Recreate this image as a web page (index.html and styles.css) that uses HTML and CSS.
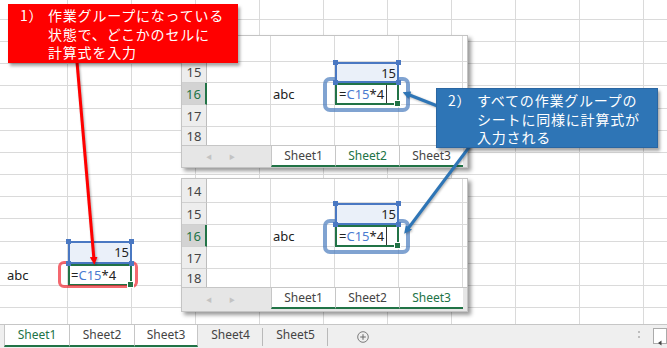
FILE: index.html
```html
<!DOCTYPE html>
<html lang="ja">
<head>
    <meta charset="UTF-8">
    <title>作業グループの計算式</title>
    <link rel="stylesheet" href="styles.css">
</head>
<body>
<div class="screen">

    <!-- main sheet -->
    <div class="sheet">
        <div class="m-abc">abc</div>
        <div class="m-ref ref">
            <i class="h tl"></i><i class="h tr"></i><i class="h bl"></i><i class="h br"></i>15
        </div>
        <div class="m-fx fx">=<span class="r">C15</span>*4<span class="ring red"></span></div>
    </div>

    <div class="tabbar">
        <div class="tab grp on">Sheet1</div>
        <div class="tab grp">Sheet2</div>
        <div class="tab grp last">Sheet3</div>
        <div class="tab plain">Sheet4</div>
        <div class="tab plain">Sheet5</div>
        <div class="add">
            <svg width="12" height="12" viewBox="0 0 12 12">
                <circle cx="6" cy="6" r="5.3" fill="none" stroke="#7b7b7b" stroke-width="1"/>
                <path d="M6 3.2v5.6M3.2 6h5.6" stroke="#6b6b6b" stroke-width="1"/>
            </svg>
        </div>
        <div class="spacer"></div>
        <div class="dots"></div>
        <div class="scroll-btn">
            <svg width="6" height="6" viewBox="0 0 6 6"><path d="M4.5 0.5v5L1 3z" fill="#444"/></svg>
        </div>
    </div>

    <!-- window: Sheet2 (row 14 header sits under the red note) -->
    <div class="win win-a">
        <div class="row"><div class="rh"></div><div class="c"></div><div class="c"></div><div class="c"></div><div class="c"></div><div class="c end"></div></div>
        <div class="row"><div class="rh">15</div><div class="c"></div><div class="c"></div><div class="c ref"><i class="h tl"></i><i class="h tr"></i><i class="h bl"></i><i class="h br"></i>15</div><div class="c"></div><div class="c end"></div></div>
        <div class="row cur"><div class="rh">16</div><div class="c"></div><div class="c">abc</div><div class="c fx">=<span class="r">C15</span>*4<span class="caret"></span><span class="ring"></span></div><div class="c"></div><div class="c end"></div></div>
        <div class="row"><div class="rh">17</div><div class="c"></div><div class="c"></div><div class="c"></div><div class="c"></div><div class="c end"></div></div>
        <div class="row cut"><div class="rh">18</div><div class="c"></div><div class="c"></div><div class="c"></div><div class="c"></div><div class="c end"></div></div>
        <div class="wtabs">
            <div class="wnav"><span>&#9664;</span><span>&#9654;</span></div>
            <div class="wtab">Sheet1</div>
            <div class="wtab on">Sheet2</div>
            <div class="wtab">Sheet3</div>
        </div>
    </div>

    <!-- window: Sheet3 -->
    <div class="win win-b">
        <div class="row"><div class="rh">14</div><div class="c"></div><div class="c"></div><div class="c"></div><div class="c"></div><div class="c end"></div></div>
        <div class="row"><div class="rh">15</div><div class="c"></div><div class="c"></div><div class="c ref"><i class="h tl"></i><i class="h tr"></i><i class="h bl"></i><i class="h br"></i>15</div><div class="c"></div><div class="c end"></div></div>
        <div class="row cur"><div class="rh">16</div><div class="c"></div><div class="c">abc</div><div class="c fx">=<span class="r">C15</span>*4<span class="caret"></span><span class="ring"></span></div><div class="c"></div><div class="c end"></div></div>
        <div class="row"><div class="rh">17</div><div class="c"></div><div class="c"></div><div class="c"></div><div class="c"></div><div class="c end"></div></div>
        <div class="row cut"><div class="rh">18</div><div class="c"></div><div class="c"></div><div class="c"></div><div class="c"></div><div class="c end"></div></div>
        <div class="wtabs">
            <div class="wnav"><span>&#9664;</span><span>&#9654;</span></div>
            <div class="wtab">Sheet1</div>
            <div class="wtab">Sheet2</div>
            <div class="wtab on">Sheet3</div>
        </div>
    </div>

    <!-- pointer lines -->
    <svg class="marks" width="667" height="348" viewBox="0 0 667 348">
        <defs>
            <marker id="tip-red" viewBox="0 0 10 10" refX="4" refY="5" markerWidth="2.6" markerHeight="2.6" orient="auto">
                <path d="M0 0L10 5L0 10z" fill="#ff0000"/>
            </marker>
            <marker id="tip-blue" viewBox="0 0 10 10" refX="4" refY="5" markerWidth="2.6" markerHeight="2.6" orient="auto">
                <path d="M0 0L10 5L0 10z" fill="#2e75b6"/>
            </marker>
        </defs>
        <line class="shade" x1="77" y1="62" x2="94" y2="260" stroke="#ff0000" stroke-width="3" marker-end="url(#tip-red)"/>
        <line class="shade" x1="440" y1="107" x2="407" y2="94" stroke="#2e75b6" stroke-width="3" marker-end="url(#tip-blue)"/>
        <line class="shade" x1="470" y1="146" x2="407" y2="230" stroke="#2e75b6" stroke-width="3" marker-end="url(#tip-blue)"/>
    </svg>

    <!-- callouts -->
    <div class="note note-red">
        <div class="num">1）</div>
        <div>作業グループになっている<br>状態で、どこかのセルに<br>計算式を入力</div>
    </div>
    <div class="note note-blue">
        <div class="num">2）</div>
        <div>すべての作業グループの<br>シートに同様に計算式が<br>入力される</div>
    </div>

</div>
</body>
</html>
```

FILE: styles.css
```css
* {
    margin: 0;
    padding: 0;
    box-sizing: border-box;
}

body {
    font-family: "Noto Sans", "Noto Sans CJK JP", sans-serif;
    font-size: 13px;
    color: #222;
    background: #fff;
    overflow: hidden;
}

.screen {
    position: relative;
    width: 667px;
    height: 348px;
    overflow: hidden;
}

/* Main sheet */
.sheet {
    height: 324px;
    display: grid;
    grid-template-columns: 68px repeat(9, 64px) 1fr;
    grid-template-rows: 20px repeat(14, 22.15px);
    background:
        repeating-linear-gradient(to right, transparent 0 63px, #dadada 63px 64px) 4px 0 / 100% 100%,
        repeating-linear-gradient(to bottom, transparent 0 21.15px, #dadada 21.15px 22.15px) 0 -2.15px / 100% calc(100% + 2.15px);
}

.m-abc {
    grid-area: 13 / 1;
    padding-left: 7px;
    display: flex;
    align-items: center;
}

.m-ref {
    grid-area: 12 / 2;
}

.m-fx {
    grid-area: 13 / 2;
}

/* Selected reference cell and formula cell */
.ref {
    position: relative;
    z-index: 2;
    display: flex;
    align-items: center;
    justify-content: flex-end;
    padding-right: 1px;
    background: #eaf0f9;
    border: 2px solid #4a78c2 !important;
}

.h {
    position: absolute;
    width: 5px;
    height: 5px;
    background: #4a78c2;
}

.tl { left: -4px; top: -4px; }
.tr { right: -4px; top: -4px; }
.bl { left: -4px; bottom: -4px; }
.br { right: -4px; bottom: -4px; }

.fx {
    position: relative;
    z-index: 1;
    display: flex;
    align-items: center;
    padding-left: 1px;
    white-space: nowrap;
    background: #fff;
    border: 2px solid #217346 !important;
}

.fx::after {
    content: "";
    position: absolute;
    right: -4px;
    bottom: -4px;
    width: 5px;
    height: 5px;
    background: #217346;
    border: 1px solid #fff;
}

.r {
    color: #4a7bd0;
}

.caret {
    align-self: stretch;
    margin-left: 2px;
    border-left: 1.5px solid #333;
}

.ring {
    position: absolute;
    left: -14px;
    right: -13px;
    top: -8px;
    bottom: -9px;
    border: 4px solid rgba(74, 124, 190, 0.7);
    border-radius: 7px;
}

.ring.red {
    left: -12px;
    right: -8px;
    top: -5px;
    bottom: -4px;
    border: 3px solid rgba(240, 40, 50, 0.7);
    border-radius: 6px;
}

/* Main sheet tabs */
.tabbar {
    height: 24px;
    display: flex;
    align-items: flex-start;
    padding-left: 4px;
    background: #efefef;
    border-top: 1px solid #c6c6c6;
    font-size: 12px;
    color: #444;
}

.tab {
    position: relative;
    width: 65px;
    height: 21px;
    line-height: 20px;
    text-align: center;
}

.tab.grp {
    height: 22px;
    background: #fff;
    border-left: 1px solid #c6c6c6;
    border-bottom: 2px solid #217346;
}

.tab.grp.last {
    width: 64px;
    border-right: 1px solid #c6c6c6;
}

.tab.on {
    color: #217346;
}

.tab.plain::after {
    content: "";
    position: absolute;
    right: 0;
    top: 3px;
    bottom: 0;
    width: 1px;
    background: #b9b9b9;
}

.add {
    margin: 5px 0 0 29px;
}

.spacer {
    flex: 1;
}

.dots {
    width: 2px;
    height: 10px;
    margin: 6px 13px 0 0;
    background: repeating-linear-gradient(to bottom, #bdbdbd 0 2px, transparent 2px 5px);
}

.scroll-btn {
    width: 14px;
    height: 16px;
    margin-top: 3px;
    padding: 4px 0 0 3px;
    background: #fff;
    border: 1px solid #ababab;
}

/* Floating sheet windows */
.win {
    position: absolute;
    left: 181px;
    width: 287px;
    z-index: 3;
    background: #fff;
    border: 1px solid #c4c4c4;
    box-shadow: 3px 3px 4px rgba(0, 0, 0, 0.4);
}

.win-a {
    top: 35px;
}

.win-b {
    top: 178px;
}

.row {
    display: flex;
    height: 22px;
}

.win-a .row:nth-child(1) { height: 26px; }
.win-a .row:nth-child(2) { height: 21px; }
.win-b .row:nth-child(1) { height: 24px; }
.row.cut { height: 18px; }

.rh {
    width: 25px;
    display: flex;
    align-items: center;
    justify-content: center;
    background: #ededed;
    color: #444;
    border-right: 1px solid #bdbdbd;
    border-bottom: 1px solid #d0d0d0;
}

.cur .rh {
    background: #d3d3d3;
    color: #217346;
    border-right: 2px solid #217346;
}

.c {
    width: 64px;
    display: flex;
    align-items: center;
    padding-left: 2px;
    border-right: 1px solid #dadada;
    border-bottom: 1px solid #dadada;
}

.c.end {
    flex: 1;
    border-right: none;
}

.cut .rh,
.cut .c {
    border-bottom: none;
}

.wtabs {
    display: flex;
    height: 22px;
    background: #e6e6e6;
    border-top: 1px solid #c6c6c6;
    font-size: 12px;
    color: #444;
}

.win-b .wtabs {
    height: 24px;
}

.wnav {
    width: 89px;
    display: flex;
    align-items: center;
    gap: 17px;
    padding-left: 24px;
    font-size: 6px;
    color: #c3c3c3;
}

.wtab {
    width: 64px;
    height: 21px;
    line-height: 19px;
    text-align: center;
    background: #fff;
    border-left: 1px solid #c6c6c6;
    border-bottom: 2px solid #217346;
}

.wtab.on {
    color: #217346;
}

/* Annotations */
.marks {
    position: absolute;
    left: 0;
    top: 0;
    z-index: 4;
}

.shade {
    filter: drop-shadow(1px 1px 1px rgba(0, 0, 0, 0.3));
}

.note {
    position: absolute;
    z-index: 5;
    display: flex;
    color: #fff;
    font-family: "Noto Sans CJK JP", sans-serif;
    font-size: 14px;
    line-height: 18.5px;
    letter-spacing: 0.8px;
    white-space: nowrap;
    box-shadow: 2px 3px 3px rgba(0, 0, 0, 0.35);
}

.note .num {
    width: 28px;
    flex: none;
}

.note-red {
    left: 8px;
    top: 4px;
    width: 230px;
    height: 59px;
    padding: 2px 0 0 12px;
    background: #ff0000;
}

.note-blue {
    left: 436px;
    top: 88px;
    width: 222px;
    height: 60px;
    padding: 2px 0 0 11px;
    background: #2e75b6;
    border: 1px solid #2a66a2;
}

.note-blue .num {
    width: 29px;
}
```
